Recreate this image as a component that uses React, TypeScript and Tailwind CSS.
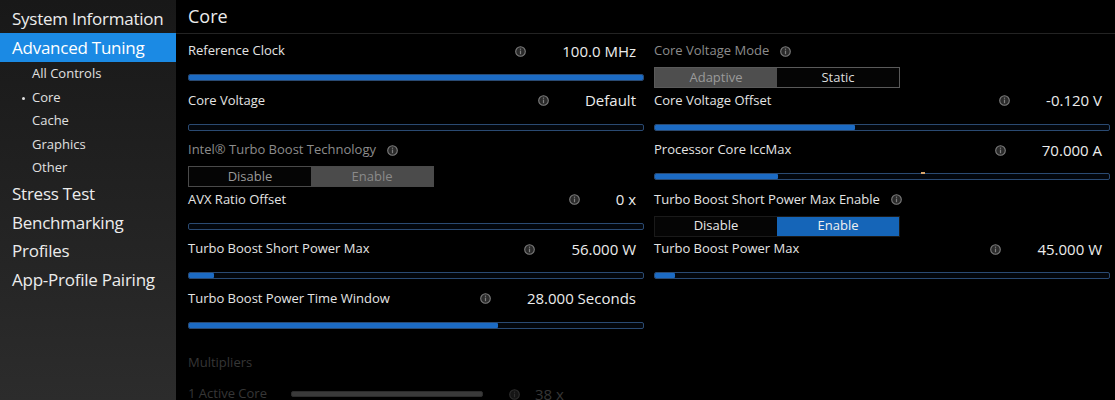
import React from "react";

const FONT = { fontFamily: '"Open Sans", "Noto Sans", sans-serif' };

function Info({ dim = false }: { dim?: boolean }) {
  const c = dim ? "#2e2e2e" : "#7d7d7d";
  return (
    <svg width="11" height="11" viewBox="0 0 11 11" className="shrink-0">
      <circle cx="5.5" cy="5.5" r="4.8" fill={dim ? "#151515" : "#2a2a2a"} stroke={c} strokeWidth="1.1" />
      <rect x="4.9" y="4.6" width="1.2" height="3.6" fill={c} />
      <rect x="4.9" y="2.6" width="1.2" height="1.2" fill={c} />
    </svg>
  );
}

function Slider({ pct, tick }: { pct: number; tick?: number }) {
  return (
    <div className="relative mt-[13px] h-[7px] rounded-[2px] border border-[#2a4a72] bg-[#03070d]">
      <div className="h-full rounded-[1px] bg-[#1c6bc4]" style={{ width: `${pct}%` }} />
      {tick !== undefined && (
        <div className="absolute top-[-2px] h-[2px] w-[4px] bg-[#d9a56a]" style={{ left: `${tick}%` }} />
      )}
    </div>
  );
}

function SliderRow({ label, value, pct, tick }: { label: string; value: string; pct: number; tick?: number }) {
  return (
    <div className="flex h-[49.5px] flex-col">
      <div className="flex h-[20px] items-center pr-[8px]">
        <span className="flex-1 whitespace-nowrap text-[13px] text-[#e4e4e4]">{label}</span>
        <Info />
        <span className="ml-[36px] whitespace-nowrap text-[15px] text-[#ececec]">{value}</span>
      </div>
      <Slider pct={pct} tick={tick} />
    </div>
  );
}

function ToggleRow({
  label,
  left,
  right,
  selected,
  variant,
}: {
  label: string;
  left: string;
  right: string;
  selected: "left" | "right";
  variant: "disabled" | "grayActive" | "blue";
}) {
  const labelColor = variant === "blue" ? "text-[#e4e4e4]" : "text-[#8c8c8c]";
  let box = "";
  let selCls = "";
  let unselCls = "";
  if (variant === "disabled") {
    box = "border border-[#4a4a4a]";
    selCls = "bg-[#4b4b4b] text-[#8a8a8a]";
    unselCls = "bg-[#050505] text-[#9a9a9a]";
  } else if (variant === "grayActive") {
    box = "border border-[#5a5a5a]";
    selCls = "bg-[#4e4e4e] text-[#9a9a9a]";
    unselCls = "bg-[#050505] text-[#dcdcdc]";
  } else {
    box = "border border-[#1a1a1a]";
    selCls = "bg-[#1565b8] text-[#f0f0f0]";
    unselCls = "bg-[#050505] text-[#e8e8e8]";
  }
  return (
    <div className="flex h-[49.5px] flex-col">
      <div className="flex h-[20px] items-center">
        <span className={`whitespace-nowrap text-[13px] ${labelColor}`}>{label}</span>
        <span className="ml-[11px] flex">
          <Info />
        </span>
      </div>
      <div className={`mt-[6px] flex h-[21px] w-[246px] ${box}`}>
        <div className={`flex flex-1 items-center justify-center text-[13px] ${selected === "left" ? selCls : unselCls}`}>
          {left}
        </div>
        <div className={`flex flex-1 items-center justify-center text-[13px] ${selected === "right" ? selCls : unselCls}`}>
          {right}
        </div>
      </div>
    </div>
  );
}

export default function App() {
  const big = "flex items-center whitespace-nowrap pl-[12px] text-[17px] tracking-[-0.25px]";
  return (
    <div className="flex h-[400px] w-[1115px] overflow-hidden bg-black" style={FONT}>
      <aside className="flex w-[176px] shrink-0 flex-col bg-gradient-to-b from-[#181818] to-[#2c2c2c] pt-[4px] text-[#ececec]">
        <div className={`h-[29px] ${big}`}>System Information</div>
        <div className={`h-[29px] bg-[#1b8ae4] text-white ${big}`}>Advanced Tuning</div>
        <div className="flex flex-col text-[13px] text-[#e0e0e0]">
          {["All Controls", "Core", "Cache", "Graphics", "Other"].map((s) => (
            <div key={s} className="relative flex h-[23.5px] items-center whitespace-nowrap pl-[32px]">
              {s === "Core" && <span className="absolute left-[22px] top-[11px] h-[3px] w-[3px] rounded-full bg-[#e0e0e0]" />}
              {s}
            </div>
          ))}
        </div>
        {["Stress Test", "Benchmarking", "Profiles", "App-Profile Pairing"].map((s) => (
          <div key={s} className={`h-[28.7px] ${big}`}>
            {s}
          </div>
        ))}
      </aside>
      <main className="flex flex-1 flex-col">
        <div className="flex h-[34px] shrink-0 items-center border-b border-[#232323] pl-[12px] text-[18px] text-[#ececec]">
          Core
        </div>
        <div className="grid grid-cols-2 gap-x-[10px] pl-[12px] pr-[5px] pt-[7px]">
          <div className="flex flex-col">
            <SliderRow label="Reference Clock" value="100.0 MHz" pct={100} />
            <SliderRow label="Core Voltage" value="Default" pct={0} />
            <ToggleRow label="Intel® Turbo Boost Technology" left="Disable" right="Enable" selected="right" variant="disabled" />
            <SliderRow label="AVX Ratio Offset" value="0 x" pct={0} />
            <SliderRow label="Turbo Boost Short Power Max" value="56.000 W" pct={5.5} />
            <SliderRow label="Turbo Boost Power Time Window" value="28.000 Seconds" pct={68} />
            <div className="mt-[15px] flex h-[20px] items-center text-[13px] text-[#363636]">Multipliers</div>
            <div className="mt-[11px] flex h-[20px] items-center">
              <span className="w-[103px] whitespace-nowrap text-[13px] text-[#363636]">1 Active Core</span>
              <div className="h-[6px] w-[192px] rounded-[2px] border border-[#2c2c2c] bg-[#3a3a3a]" />
              <span className="ml-[26px] flex">
                <Info dim />
              </span>
              <span className="ml-[15px] whitespace-nowrap text-[15px] text-[#363636]">38 x</span>
            </div>
          </div>
          <div className="flex flex-col">
            <ToggleRow label="Core Voltage Mode" left="Adaptive" right="Static" selected="left" variant="grayActive" />
            <SliderRow label="Core Voltage Offset" value="-0.120 V" pct={44} />
            <SliderRow label="Processor Core IccMax" value="70.000 A" pct={27} tick={58.5} />
            <ToggleRow label="Turbo Boost Short Power Max Enable" left="Disable" right="Enable" selected="right" variant="blue" />
            <SliderRow label="Turbo Boost Power Max" value="45.000 W" pct={4.4} />
          </div>
        </div>
      </main>
    </div>
  );
}
